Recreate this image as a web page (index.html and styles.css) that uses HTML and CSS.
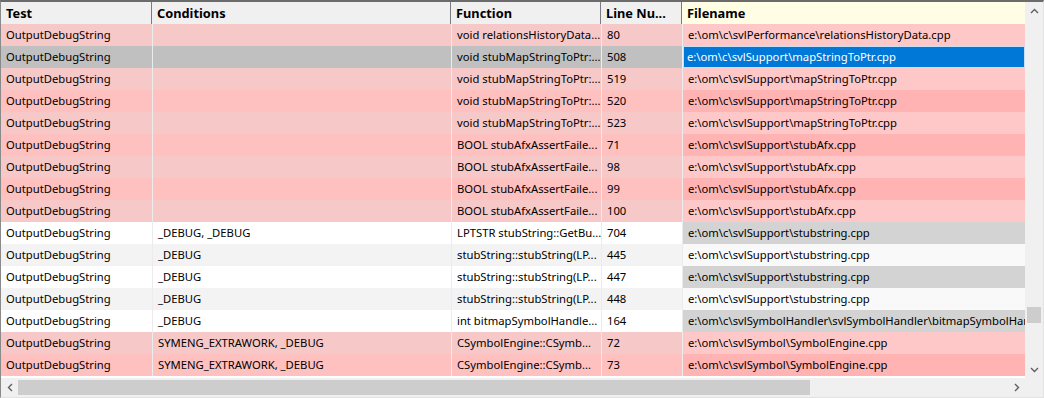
FILE: index.html
```html
<!DOCTYPE html>
<html>
<head>
<meta charset="utf-8">
<link rel="stylesheet" href="styles.css">
</head>
<body>
<div class="window">
  <div class="list">
    <div class="row head">
      <div class="c">Test</div>
      <div class="c">Conditions</div>
      <div class="c">Function</div>
      <div class="c">Line Nu...</div>
      <div class="c fn">Filename</div>
    </div>
    <div class="row pa"><div class="c">OutputDebugString</div><div class="c"></div><div class="c">void relationsHistoryData...</div><div class="c">80</div><div class="c fn">e:\om\c\svlPerformance\relationsHistoryData.cpp</div></div>
    <div class="row sel"><div class="c">OutputDebugString</div><div class="c"></div><div class="c">void stubMapStringToPtr:...</div><div class="c">508</div><div class="c fn">e:\om\c\svlSupport\mapStringToPtr.cpp</div></div>
    <div class="row pa"><div class="c">OutputDebugString</div><div class="c"></div><div class="c">void stubMapStringToPtr:...</div><div class="c">519</div><div class="c fn">e:\om\c\svlSupport\mapStringToPtr.cpp</div></div>
    <div class="row pb"><div class="c">OutputDebugString</div><div class="c"></div><div class="c">void stubMapStringToPtr:...</div><div class="c">520</div><div class="c fn">e:\om\c\svlSupport\mapStringToPtr.cpp</div></div>
    <div class="row pa"><div class="c">OutputDebugString</div><div class="c"></div><div class="c">void stubMapStringToPtr:...</div><div class="c">523</div><div class="c fn">e:\om\c\svlSupport\mapStringToPtr.cpp</div></div>
    <div class="row pb"><div class="c">OutputDebugString</div><div class="c"></div><div class="c">BOOL stubAfxAssertFaile...</div><div class="c">71</div><div class="c fn">e:\om\c\svlSupport\stubAfx.cpp</div></div>
    <div class="row pa"><div class="c">OutputDebugString</div><div class="c"></div><div class="c">BOOL stubAfxAssertFaile...</div><div class="c">98</div><div class="c fn">e:\om\c\svlSupport\stubAfx.cpp</div></div>
    <div class="row pb"><div class="c">OutputDebugString</div><div class="c"></div><div class="c">BOOL stubAfxAssertFaile...</div><div class="c">99</div><div class="c fn">e:\om\c\svlSupport\stubAfx.cpp</div></div>
    <div class="row pa"><div class="c">OutputDebugString</div><div class="c"></div><div class="c">BOOL stubAfxAssertFaile...</div><div class="c">100</div><div class="c fn">e:\om\c\svlSupport\stubAfx.cpp</div></div>
    <div class="row wb"><div class="c">OutputDebugString</div><div class="c">_DEBUG, _DEBUG</div><div class="c">LPTSTR stubString::GetBu...</div><div class="c">704</div><div class="c fn">e:\om\c\svlSupport\stubstring.cpp</div></div>
    <div class="row wa"><div class="c">OutputDebugString</div><div class="c">_DEBUG</div><div class="c">stubString::stubString(LP...</div><div class="c">445</div><div class="c fn">e:\om\c\svlSupport\stubstring.cpp</div></div>
    <div class="row wb"><div class="c">OutputDebugString</div><div class="c">_DEBUG</div><div class="c">stubString::stubString(LP...</div><div class="c">447</div><div class="c fn">e:\om\c\svlSupport\stubstring.cpp</div></div>
    <div class="row wa"><div class="c">OutputDebugString</div><div class="c">_DEBUG</div><div class="c">stubString::stubString(LP...</div><div class="c">448</div><div class="c fn">e:\om\c\svlSupport\stubstring.cpp</div></div>
    <div class="row wb"><div class="c">OutputDebugString</div><div class="c">_DEBUG</div><div class="c">int bitmapSymbolHandle...</div><div class="c">164</div><div class="c fn">e:\om\c\svlSymbolHandler\svlSymbolHandler\bitmapSymbolHandler.cpp</div></div>
    <div class="row pa"><div class="c">OutputDebugString</div><div class="c">SYMENG_EXTRAWORK, _DEBUG</div><div class="c">CSymbolEngine::CSymb...</div><div class="c">72</div><div class="c fn">e:\om\c\svlSymbol\SymbolEngine.cpp</div></div>
    <div class="row pb"><div class="c">OutputDebugString</div><div class="c">SYMENG_EXTRAWORK, _DEBUG</div><div class="c">CSymbolEngine::CSymb...</div><div class="c">73</div><div class="c fn">e:\om\c\svlSymbol\SymbolEngine.cpp</div></div>
  </div>
  <div class="vscroll">
    <div class="arrow"><svg width="9" height="6" viewBox="0 0 9 6"><polyline points="1,5 4.5,1.5 8,5" fill="none" stroke="#606060" stroke-width="1.4"/></svg></div>
    <div class="vtrack"><div class="vthumb"></div></div>
    <div class="arrow"><svg width="9" height="6" viewBox="0 0 9 6"><polyline points="1,1 4.5,4.5 8,1" fill="none" stroke="#606060" stroke-width="1.4"/></svg></div>
  </div>
  <div class="hscroll">
    <div class="harrow"><svg width="6" height="9" viewBox="0 0 6 9"><polyline points="5,1 1.5,4.5 5,8" fill="none" stroke="#606060" stroke-width="1.4"/></svg></div>
    <div class="htrack"><div class="hthumb"></div></div>
    <div class="harrow"><svg width="6" height="9" viewBox="0 0 6 9"><polyline points="1,1 4.5,4.5 1,8" fill="none" stroke="#606060" stroke-width="1.4"/></svg></div>
  </div>
  <div class="corner"></div>
</div>
</body>
</html>
```
FILE: styles.css
```css
html, body {
  margin: 0;
  padding: 0;
  background: #ffffff;
}
.window {
  width: 1044px;
  height: 398px;
  box-sizing: border-box;
  border-top: 2px solid #6b6b6b;
  border-left: 1px solid #8a8a8a;
  border-right: 1px solid #e3e3e3;
  border-bottom: 1px solid #e3e3e3;
  display: grid;
  grid-template-columns: 1024px 18px;
  grid-template-rows: 376px 19px;
  font-family: "Noto Sans", "Open Sans", sans-serif;
  font-size: 11.25px;
  color: #000;
  overflow: hidden;
}
.list {
  background: #ffffff;
  overflow: hidden;
}
.row {
  display: grid;
  grid-template-columns: 151px 299px 150px 81px 343px;
  height: 22px;
}
.c {
  box-sizing: border-box;
  padding-left: 5px;
  line-height: 22px;
  white-space: nowrap;
  overflow: hidden;
  border-left: 1px solid #ececec;
}
.c:first-child {
  border-left: none;
}
.head .c {
  font-weight: bold;
  font-size: 12.8px;
  background: #f0f0f0;
  border-left: none;
  border-right: 1px solid #7c7c7c;
  line-height: 22px;
}
.head .fn {
  background: #fffde3;
  border-right: none;
}
.pa .c { background: #f7c8c8; }
.pa .fn { background: #ffc8c8; }
.pb .c { background: #ffc0c0; }
.pb .fn { background: #ffb3b3; }
.wa .c { background: #f3f3f3; }
.wa .fn { background: #f9f9f9; }
.wb .c { background: #ffffff; }
.wb .fn { background: #d3d3d3; }
.sel .c { background: #c0c0c0; }
.sel .fn {
  background: #0078d7;
  color: #ffffff;
  box-shadow: inset 0 0 0 1px #c6dff5;
  padding-left: 4px;
  border-left: 1px solid #f0f0f0;
}
.vscroll {
  background: #f0f0f0;
  display: flex;
  flex-direction: column;
}
.arrow {
  height: 17px;
  display: flex;
  align-items: center;
  justify-content: center;
}
.vtrack {
  flex: 1;
  padding: 0 2px;
}
.vthumb {
  margin-top: 288px;
  height: 16px;
  background: #cdcdcd;
}
.hscroll {
  background: #f0f0f0;
  display: flex;
  align-items: stretch;
}
.harrow {
  width: 17px;
  display: flex;
  align-items: center;
  justify-content: center;
}
.htrack {
  flex: 1;
  padding: 2px 0;
  box-sizing: border-box;
}
.hthumb {
  width: 792px;
  height: 100%;
  background: #cdcdcd;
}
.corner {
  background: #f0f0f0;
}
```
